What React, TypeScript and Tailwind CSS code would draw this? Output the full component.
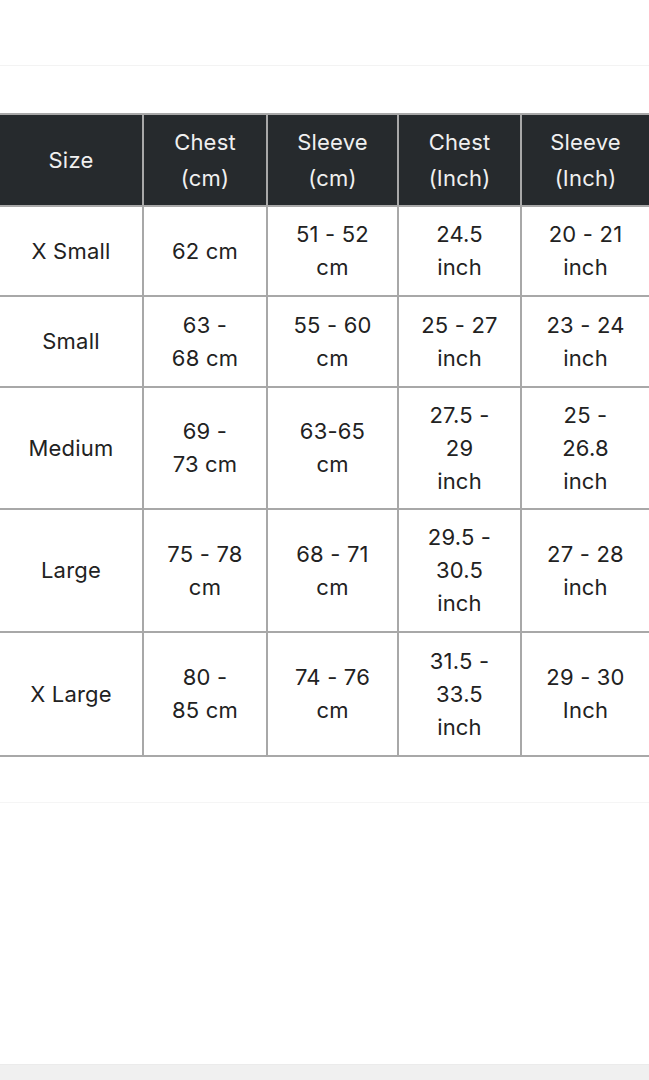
import React from "react";

const header = ["Size", "Chest\n(cm)", "Sleeve\n(cm)", "Chest\n(Inch)", "Sleeve\n(Inch)"];
const rows: { h: string; cells: string[] }[] = [
  { h: "h-[90px]", cells: ["X Small", "62 cm", "51 - 52\ncm", "24.5\ninch", "20 - 21\ninch"] },
  { h: "h-[91px]", cells: ["Small", "63 -\n68 cm", "55 - 60\ncm", "25 - 27\ninch", "23 - 24\ninch"] },
  { h: "h-[122px]", cells: ["Medium", "69 -\n73 cm", "63-65\ncm", "27.5 -\n29\ninch", "25 -\n26.8\ninch"] },
  { h: "h-[123px]", cells: ["Large", "75 - 78\ncm", "68 - 71\ncm", "29.5 -\n30.5\ninch", "27 - 28\ninch"] },
  { h: "h-[124px]", cells: ["X Large", "80 -\n85 cm", "74 - 76\ncm", "31.5 -\n33.5\ninch", "29 - 30\nInch"] },
];

const cols = "grid grid-cols-[142px_124px_131px_123px_129px]";

function Cell({ text, first, dark }: { text: string; first: boolean; dark?: boolean }) {
  return (
    <div
      className={`flex items-center justify-center text-center whitespace-pre-line ${
        first ? "" : "border-l-2 border-[#a8a8a8]"
      } ${dark ? "text-[#f0f0f0] leading-[36px]" : "text-[#222] leading-[33px]"}`}
    >
      {text}
    </div>
  );
}

export default function App() {
  return (
    <div
      className="w-[649px] h-[1080px] bg-white flex flex-col overflow-hidden text-[22px] tracking-[0.2px]"
      style={{ fontFamily: "Inter, 'Noto Sans', 'Liberation Sans', sans-serif" }}
    >
      <div className="h-[66px] border-b border-[#f3f3f3] shrink-0" />
      <div className="h-[47px] shrink-0" />
      <div className="w-[649px] border-t-2 border-[#a8a8a8]">
        <div className={`${cols} h-[92px] bg-[#262a2d] border-b-2 border-[#a8a8a8]`}>
          {header.map((t, i) => (
            <Cell key={i} text={t} first={i === 0} dark />
          ))}
        </div>
        {rows.map((r, ri) => (
          <div key={ri} className={`${cols} ${r.h} border-b-2 border-[#a8a8a8]`}>
            {r.cells.map((t, i) => (
              <Cell key={i} text={t} first={i === 0} />
            ))}
          </div>
        ))}
      </div>
      <div className="h-[46px] border-b border-[#f5f5f5] shrink-0" />
      <div className="flex-1" />
      <div className="h-[16px] bg-[#f0f0f0] border-t border-[#ebebeb] shrink-0" />
    </div>
  );
}
